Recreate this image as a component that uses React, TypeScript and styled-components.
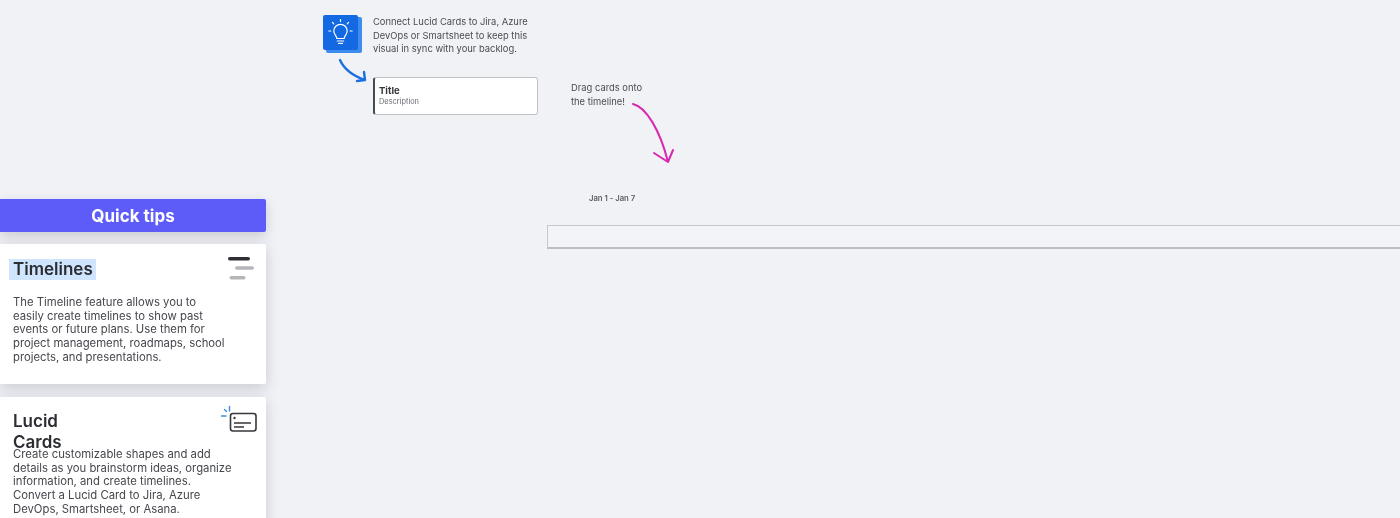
import React from "react";
import styled, { createGlobalStyle } from "styled-components";

const GlobalStyle = createGlobalStyle`
  html, body {
    margin: 0;
    height: 100%;
    background: #f1f2f6;
    overflow: hidden;
  }
  body {
    font-family: Inter, "Liberation Sans", sans-serif;
    color: #3a3c42;
  }
`;

const Page = styled.div`
  display: flex;
  width: 1400px;
  height: 518px;
  overflow: hidden;
  background: #f1f2f6;
  filter: blur(0.5px);
`;

const Sidebar = styled.aside`
  flex: 0 0 266px;
  min-width: 0;
  display: flex;
  flex-direction: column;
  padding-top: 199px;
`;

const TipsHeader = styled.header`
  flex: 0 0 33px;
  display: flex;
  align-items: center;
  justify-content: center;
  background: #5e5cf8;
  border-radius: 0 2px 2px 0;
  color: #fff;
  font-size: 17px;
  font-weight: 700;
  box-shadow: 0 4px 12px rgba(60, 64, 90, 0.22);
  margin-bottom: 12px;
`;

const TipCard = styled.section<{ $height: number; $pad: number }>`
  position: relative;
  flex: 0 0 ${(p) => p.$height}px;
  box-sizing: border-box;
  padding: ${(p) => p.$pad}px 0 0 13px;
  background: #fff;
  border-radius: 0 2px 2px 0;
  box-shadow: 0 4px 14px rgba(60, 64, 90, 0.22);
  margin-bottom: 13px;
`;

const TipTitle = styled.h2<{ $gap: number; $width?: number }>`
  margin: 0 0 ${(p) => p.$gap}px;
  font-size: 17px;
  line-height: 21px;
  font-weight: 600;
  color: #2b2d33;
  width: ${(p) => (p.$width ? `${p.$width}px` : "auto")};
`;

const Highlight = styled.span`
  display: inline-block;
  background: #cfe4fd;
  margin-left: -4px;
  padding: 0 3px 0 4px;
`;

const TipText = styled.p`
  margin: 0;
  font-size: 11.3px;
  line-height: 13.7px;
  color: #45474d;
  white-space: nowrap;
`;

const CornerIcon = styled.svg<{ $top: number; $left: number }>`
  position: absolute;
  top: ${(p) => p.$top}px;
  left: ${(p) => p.$left}px;
`;

const Canvas = styled.main`
  position: relative;
  flex: 1;
`;

const Note = styled.p<{ $left: number; $top: number; $leading: number }>`
  position: absolute;
  left: ${(p) => p.$left}px;
  top: ${(p) => p.$top}px;
  margin: 0;
  font-size: 9.4px;
  line-height: ${(p) => p.$leading}px;
  color: #4a4c52;
  white-space: nowrap;
`;

const CanvasArt = styled.svg<{ $left: number; $top: number }>`
  position: absolute;
  left: ${(p) => p.$left}px;
  top: ${(p) => p.$top}px;
  overflow: visible;
`;

const LucidCard = styled.div`
  position: absolute;
  left: 107px;
  top: 77px;
  width: 165px;
  height: 38px;
  box-sizing: border-box;
  padding: 7px 0 0 4px;
  background: #fff;
  border: 1px solid #bfc1c7;
  border-left: 2px solid #474a52;
  border-radius: 3px;
`;

const CardTitle = styled.div`
  font-size: 9.5px;
  line-height: 11px;
  font-weight: 700;
  color: #33353b;
`;

const CardDescription = styled.div`
  font-size: 7.4px;
  line-height: 11px;
  color: #6a6c73;
`;

const DateLabel = styled.div`
  position: absolute;
  left: 323px;
  top: 194px;
  font-size: 7.7px;
  line-height: 9px;
  font-weight: 600;
  color: #5a5c62;
  white-space: nowrap;
`;

const TimelineTrack = styled.div`
  position: absolute;
  left: 281px;
  top: 225px;
  right: -4px;
  height: 24px;
  box-sizing: border-box;
  background: #f3f4f7;
  border: 1px solid #c6c8cd;
  border-bottom: 2px solid #bcbec4;
`;

export default function App() {
  return (
    <>
      <GlobalStyle />
      <Page>
        <Sidebar>
          <TipsHeader>Quick tips</TipsHeader>
          <TipCard $height={140} $pad={15}>
            <TipTitle $gap={16}>
              <Highlight>Timelines</Highlight>
            </TipTitle>
            <TipText>
              The Timeline feature allows you to
              <br />
              easily create timelines to show past
              <br />
              events or future plans. Use them for
              <br />
              project management, roadmaps, school
              <br />
              projects, and presentations.
            </TipText>
            <CornerIcon $top={12} $left={226} width="30" height="26" viewBox="0 0 30 26">
              <rect x="2" y="1" width="22" height="3.6" rx="1.8" fill="#2d2f35" />
              <rect x="9" y="10.2" width="19" height="3.6" rx="1.8" fill="#b4b6ba" />
              <rect x="3.5" y="20" width="16" height="3.6" rx="1.8" fill="#b4b6ba" />
            </CornerIcon>
          </TipCard>
          <TipCard $height={160} $pad={14}>
            <TipTitle $gap={-5} $width={70}>
              Lucid Cards
            </TipTitle>
            <TipText>
              Create customizable shapes and add
              <br />
              details as you brainstorm ideas, organize
              <br />
              information, and create timelines.
              <br />
              Convert a Lucid Card to Jira, Azure
              <br />
              DevOps, Smartsheet, or Asana.
            </TipText>
            <CornerIcon $top={8} $left={220} width="38" height="28" viewBox="0 0 38 28">
              <rect x="10.5" y="8.5" width="25.5" height="17.5" rx="2.5" fill="none" stroke="#35373d" strokeWidth="1.6" />
              <circle cx="14.5" cy="13" r="1.2" fill="#35373d" />
              <path d="M14 18h17M14 22h10" stroke="#35373d" strokeWidth="1.3" fill="none" />
              <path d="M1.5 11h4.5M9.5 1.5v4.5M4.5 4.5l2 2" stroke="#3f8be8" strokeWidth="1.4" fill="none" strokeLinecap="round" />
            </CornerIcon>
          </TipCard>
        </Sidebar>
        <Canvas>
          {/* lightbulb tile */}
          <CanvasArt $left={57} $top={14} width="40" height="40" viewBox="0 0 40 40">
            <rect x="3" y="3" width="36" height="36" rx="2" fill="#3f8cf0" />
            <rect x="0" y="1" width="35" height="35" rx="2" fill="#1269e2" />
            <g fill="none" stroke="#fff" strokeWidth="1.2" strokeLinecap="round" strokeLinejoin="round">
              <path d="M13.8 24.5c0-2.6-3-3.8-3-7.5a6.7 6.7 0 0 1 13.4 0c0 3.7-3 4.9-3 7.5z" />
              <path d="M14.3 27h6.4M15.5 29.4h4" />
              <path d="M17.5 5.5v2M9.5 8.5l1.3 1.3M25.5 8.5l-1.3 1.3M5.8 17h2M27.2 17h2" />
            </g>
          </CanvasArt>
          <Note $left={107} $top={15} $leading={13.6}>
            Connect Lucid Cards to Jira, Azure
            <br />
            DevOps or Smartsheet to keep this
            <br />
            visual in sync with your backlog.
          </Note>
          {/* blue arrow */}
          <CanvasArt $left={72} $top={57} width="30" height="28" viewBox="0 0 30 28">
            <path
              d="M2 3C6.5 13 14 18.5 27 23M26 15L27 23L19 24"
              fill="none"
              stroke="#1c6fe0"
              strokeWidth="2.4"
              strokeLinecap="round"
              strokeLinejoin="round"
            />
          </CanvasArt>
          <LucidCard>
            <CardTitle>Title</CardTitle>
            <CardDescription>Description</CardDescription>
          </LucidCard>
          <Note $left={305} $top={81} $leading={14}>
            Drag cards onto
            <br />
            the timeline!
          </Note>
          {/* pink arrow */}
          <CanvasArt $left={364} $top={100} width="50" height="66" viewBox="0 0 50 66">
            <path
              d="M3 4C16 7 30 30 38 62M24 53L38 62L43 50"
              fill="none"
              stroke="#d62ab0"
              strokeWidth="2"
              strokeLinecap="round"
              strokeLinejoin="round"
            />
          </CanvasArt>
          <DateLabel>Jan 1 - Jan 7</DateLabel>
          <TimelineTrack />
        </Canvas>
      </Page>
    </>
  );
}
